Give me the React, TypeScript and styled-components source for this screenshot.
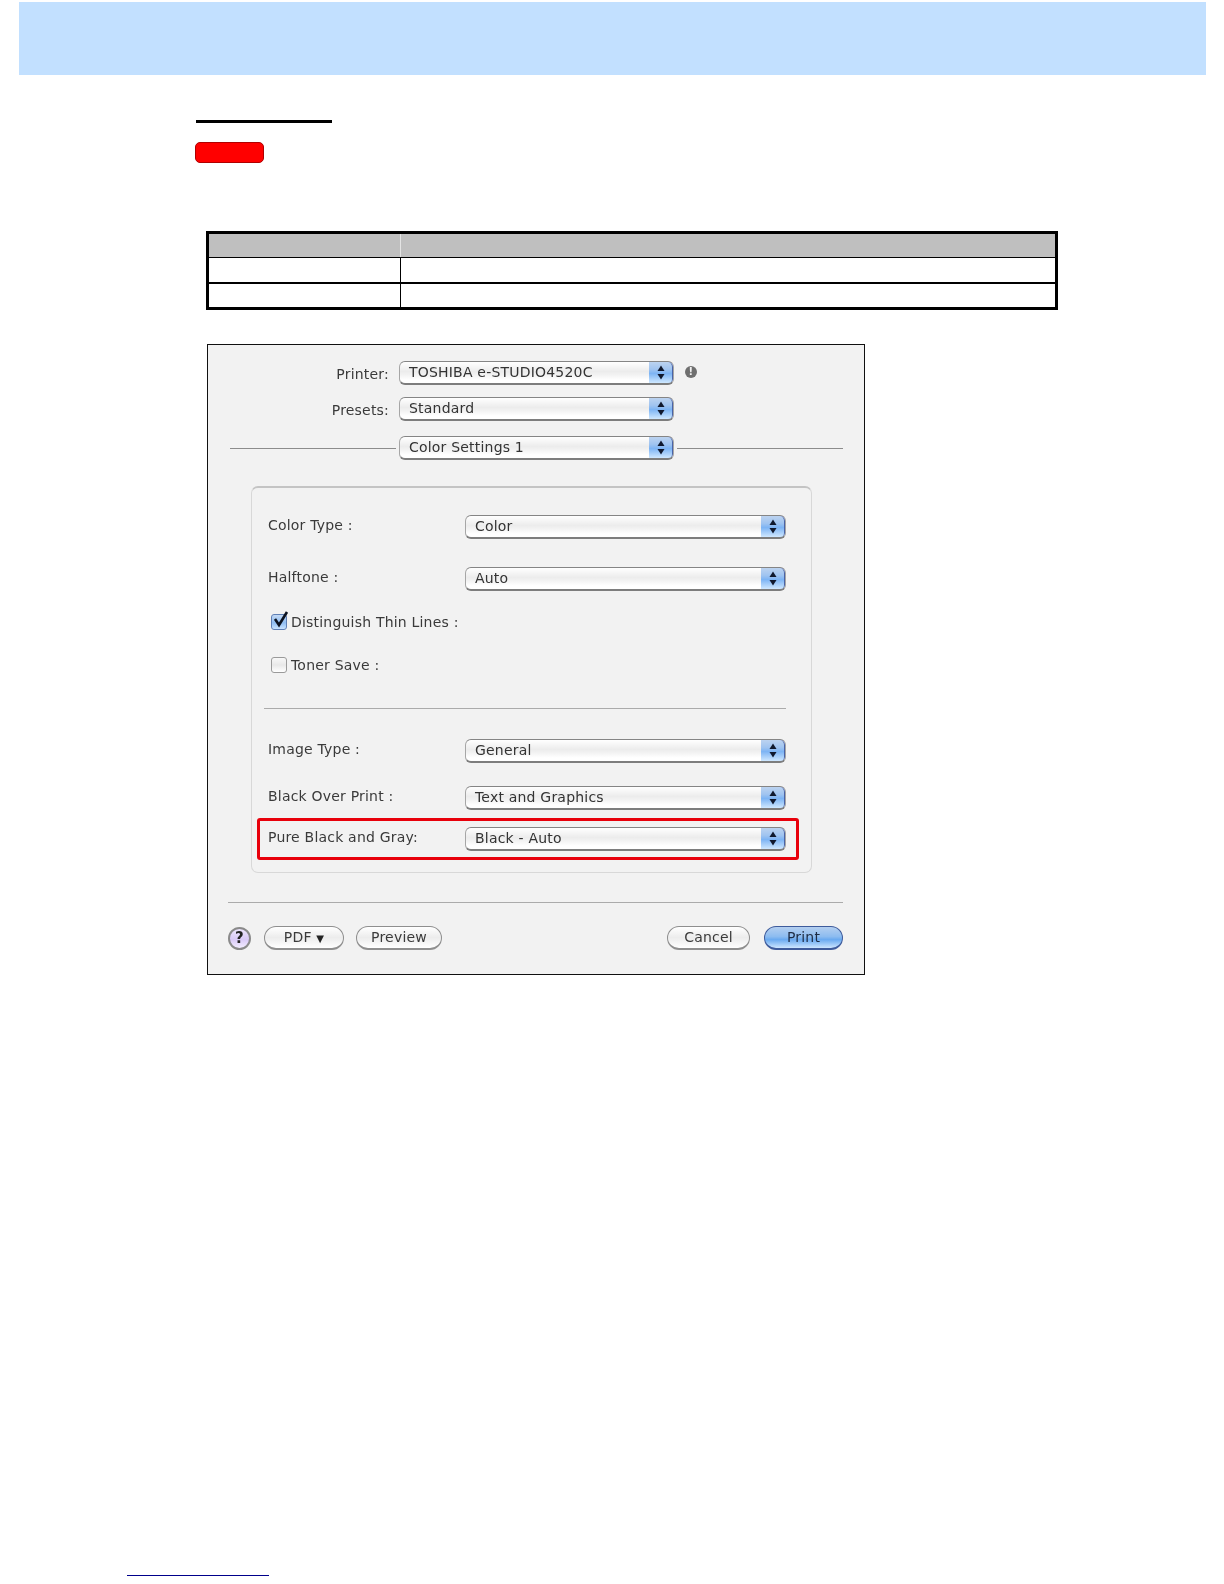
import React, { FunctionComponent } from 'react';
import styled, { createGlobalStyle } from 'styled-components';

const GlobalStyle = createGlobalStyle`
  html, body {
    margin: 0;
    padding: 0;
    background: #fff;
  }
  body {
    font-family: 'DejaVu Sans', Verdana, sans-serif;
  }
`;

const Stepper: FunctionComponent = () => (
  <StepperBox>
    <svg width="8" height="15" viewBox="0 0 8 15">
      <path d="M4 0.5 L7.5 6 L0.5 6 Z" fill="#10192e" />
      <path d="M4 14.5 L7.5 9 L0.5 9 Z" fill="#10192e" />
    </svg>
  </StepperBox>
);

const Popup: FunctionComponent<{ value: string; width: number }> = ({ value, width }) => (
  <Select $width={width}>
    <SelectValue>{value}</SelectValue>
    <Stepper />
  </Select>
);

const App: FunctionComponent = () => (
  <>
    <GlobalStyle />
    <Page>
      <Banner />
      <Section>
        <TitleRule />
        <RedTag />
        <OptionTable>
          <HeadRow>
            <HeadCell />
            <HeadCell />
          </HeadRow>
          <BodyRow $rule={1}>
            <BodyCell />
            <BodyCell />
          </BodyRow>
          <BodyRow $rule={2}>
            <BodyCell />
            <BodyCell />
          </BodyRow>
        </OptionTable>

        <Dialog>
          <DialogInner>
            <TopRows>
              <TopRow>
                <TopLabel>Printer:</TopLabel>
                <Popup value="TOSHIBA e-STUDIO4520C" width={275} />
                <Alert>!</Alert>
              </TopRow>
              <TopRow>
                <TopLabel>Presets:</TopLabel>
                <Popup value="Standard" width={275} />
              </TopRow>
              <PaneRow>
                <PaneLine />
                <Popup value="Color Settings 1" width={275} />
                <PaneLine />
              </PaneRow>
            </TopRows>

            <Group>
              <FormRow>
                <FormLabel>Color Type :</FormLabel>
                <Popup value="Color" width={321} />
              </FormRow>
              <FormRow $top={28}>
                <FormLabel>Halftone :</FormLabel>
                <Popup value="Auto" width={321} />
              </FormRow>
              <CheckRow $top={23}>
                <CheckBox $checked>
                  <svg width="18" height="19" viewBox="0 0 18 19">
                    <path d="M4 8 L8 14 L16 1" fill="none" stroke="#0c1220" strokeWidth="2.6" />
                  </svg>
                </CheckBox>
                Distinguish Thin Lines :
              </CheckRow>
              <CheckRow $top={27}>
                <CheckBox />
                Toner Save :
              </CheckRow>
              <GroupRule />
              <FormRow $top={30}>
                <FormLabel>Image Type :</FormLabel>
                <Popup value="General" width={321} />
              </FormRow>
              <FormRow $top={23}>
                <FormLabel>Black Over Print :</FormLabel>
                <Popup value="Text and Graphics" width={321} />
              </FormRow>
              <Highlight>
                <FormLabel>Pure Black and Gray:</FormLabel>
                <Popup value="Black - Auto" width={321} />
              </Highlight>
            </Group>

            <FooterRule />
            <Footer>
              <FooterSide>
                <Help>?</Help>
                <PillButton $width={80}>
                  PDF <Caret>▼</Caret>
                </PillButton>
                <PillButton $width={86}>Preview</PillButton>
              </FooterSide>
              <FooterSide>
                <PillButton $width={83}>Cancel</PillButton>
                <PillButton $width={79} $primary>
                  Print
                </PillButton>
              </FooterSide>
            </Footer>
          </DialogInner>
        </Dialog>
      </Section>
      <FootLink />
    </Page>
  </>
);

const Page = styled.div`
  width: 1224px;
  height: 1584px;
  overflow: hidden;
  padding-top: 2px;
  box-sizing: border-box;
`;

const Banner = styled.div`
  height: 73px;
  margin: 0 18px 0 19px;
  background: #c2e0ff;
`;

const Section = styled.div`
  display: flex;
  flex-direction: column;
  align-items: flex-start;
  padding: 45px 0 0 195px;
  height: 1500px;
  box-sizing: border-box;
`;

const TitleRule = styled.div`
  width: 136px;
  height: 3px;
  margin-left: 1px;
  background: #000;
`;

const RedTag = styled.div`
  width: 69px;
  height: 21px;
  margin-top: 19px;
  box-sizing: border-box;
  background: #ff0000;
  border: 1px solid #b00000;
  border-radius: 5px;
`;

const OptionTable = styled.div`
  width: 852px;
  height: 79px;
  margin: 68px 0 0 11px;
  box-sizing: border-box;
  border: 3px solid #000;
  display: flex;
  flex-direction: column;
`;

const HeadRow = styled.div`
  display: grid;
  grid-template-columns: 191px 1fr;
  height: 23px;
`;

const BodyRow = styled.div<{ $rule: number }>`
  display: grid;
  grid-template-columns: 191px 1fr;
  flex: 1;
  border-top: ${props => props.$rule}px solid #000;
`;

const HeadCell = styled.div`
  background: #bfbfbf;
  & + & {
    border-left: 1px solid #e4e4e4;
  }
`;

const BodyCell = styled.div`
  background: #fff;
  & + & {
    border-left: 1px solid #000;
  }
`;

const Dialog = styled.div`
  width: 658px;
  height: 631px;
  margin: 34px 0 0 12px;
  box-sizing: border-box;
  border: 1px solid #111;
  background: #f2f2f2;
  padding: 16px 21px 0 20px;
`;

const DialogInner = styled.div`
  display: flex;
  flex-direction: column;
  color: #3a3a3a;
  font-size: 14px;
  letter-spacing: 0.2px;
  filter: blur(0.35px);
`;

const TopRows = styled.div`
  display: flex;
  flex-direction: column;
  gap: 12px;
`;

const TopRow = styled.div`
  display: flex;
  align-items: center;
`;

const TopLabel = styled.div`
  width: 171px;
  padding: 2px 10px 0 0;
  box-sizing: border-box;
  text-align: right;
`;

const Alert = styled.div`
  width: 12px;
  height: 12px;
  margin: 0 0 2px 11px;
  border-radius: 50%;
  background: #6f6f6f;
  color: #f2f2f2;
  font-size: 10px;
  font-weight: bold;
  line-height: 12px;
  text-align: center;
`;

const PaneRow = styled.div`
  display: flex;
  align-items: center;
  gap: 3px;
  margin-top: 3px;
  padding-left: 2px;
`;

const PaneLine = styled.div`
  flex: 1;
  height: 1px;
  background: #8c8c8c;
`;

const Select = styled.div<{ $width: number }>`
  width: ${props => props.$width}px;
  height: 24px;
  flex: none;
  box-sizing: border-box;
  display: flex;
  border-radius: 6px;
  border: 1px solid #a6a6a6;
  border-top-color: #858585;
  border-bottom: 2px solid #7d7d7d;
  background: linear-gradient(#ffffff 0%, #ececec 45%, #f2f2f2 60%, #ffffff 85%);
  overflow: hidden;
`;

const SelectValue = styled.div`
  flex: 1;
  padding-left: 9px;
  line-height: 21px;
  color: #333;
  white-space: nowrap;
`;

const StepperBox = styled.div`
  width: 25px;
  box-sizing: border-box;
  display: flex;
  align-items: center;
  justify-content: center;
  margin: -1px -1px -2px 0;
  border-top: 1px solid #2f3f8f;
  border-right: 2px solid #4a64a8;
  border-bottom: 2px solid #5f7296;
  border-radius: 0 6px 6px 0;
  background: linear-gradient(#bcd3f0 0%, #a0c4f0 35%, #7db4f4 55%, #cfe8ff 100%);
`;

const Group = styled.div`
  width: 561px;
  height: 387px;
  margin: 26px 0 0 23px;
  box-sizing: border-box;
  border: 1px solid #d8d8d8;
  border-top: 2px solid #c4c4c4;
  border-radius: 7px;
  padding: 27px 0 0 0;
`;

const FormRow = styled.div<{ $top?: number }>`
  display: flex;
  align-items: center;
  margin: ${props => props.$top || 0}px 0 0 16px;
`;

const FormLabel = styled.div`
  width: 197px;
  flex: none;
  margin-top: -5px;
`;

const CheckRow = styled.div<{ $top: number }>`
  display: flex;
  align-items: center;
  gap: 2px;
  height: 16px;
  margin: ${props => props.$top}px 0 0 19px;
`;

const CheckBox = styled.div<{ $checked?: boolean }>`
  position: relative;
  width: 16px;
  height: 16px;
  flex: none;
  margin-right: 2px;
  box-sizing: border-box;
  border: 1px solid ${props => (props.$checked ? '#5f7fb5' : '#9a9a9a')};
  border-radius: 3px;
  background: ${props =>
    props.$checked
      ? 'linear-gradient(#c4daf5, #8fbdf2 55%, #c9e3ff)'
      : 'linear-gradient(#f8f8f8, #e8e8e8 50%, #ffffff)'};
  svg {
    position: absolute;
    left: -1px;
    top: -4px;
  }
`;

const GroupRule = styled.div`
  height: 1px;
  margin: 35px 25px 0 12px;
  background: #ababab;
`;

const Highlight = styled.div`
  display: flex;
  align-items: center;
  width: 542px;
  height: 42px;
  margin: 8px 0 0 5px;
  padding-left: 8px;
  box-sizing: border-box;
  border: 3px solid #e8000b;
  border-radius: 3px;
`;

const FooterRule = styled.div`
  height: 1px;
  margin-top: 29px;
  background: #ababab;
`;

const Footer = styled.div`
  display: flex;
  justify-content: space-between;
  margin-top: 23px;
`;

const FooterSide = styled.div`
  display: flex;
  align-items: center;
  gap: 12px;
`;

const Help = styled.div`
  width: 23px;
  height: 23px;
  margin-right: 1px;
  box-sizing: border-box;
  border: 2px solid #8a8a8a;
  border-radius: 50%;
  background: linear-gradient(#ece4fb, #d9c9f7 55%, #f3edff);
  color: #222;
  font-weight: bold;
  font-size: 15px;
  line-height: 19px;
  text-align: center;
`;

const PillButton = styled.div<{ $width: number; $primary?: boolean }>`
  width: ${props => props.$width}px;
  height: 24px;
  box-sizing: border-box;
  border: 1px solid ${props => (props.$primary ? '#3f5c9c' : '#8f8f8f')};
  border-bottom-width: 2px;
  border-radius: 12px;
  background: ${props =>
    props.$primary
      ? 'linear-gradient(#b4cff0, #8dbcf0 45%, #6aaaf0 60%, #cde6ff)'
      : 'linear-gradient(#ffffff, #ececec 50%, #ffffff)'};
  text-align: center;
  line-height: 21px;
  color: ${props => (props.$primary ? '#1e2c44' : '#3a3a3a')};
  margin-left: ${props => (props.$primary ? 2 : 0)}px;
`;

const Caret = styled.span`
  font-size: 10px;
  color: #222;
`;

const FootLink = styled.div`
  width: 142px;
  height: 1px;
  margin: 0 0 0 127px;
  background: #00008b;
`;

export default App;
